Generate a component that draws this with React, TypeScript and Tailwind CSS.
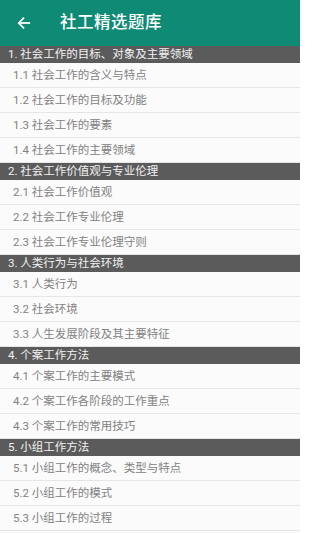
import React from 'react';

interface Section {
  title: string;
  items: string[];
}

const sections: Section[] = [
  {
    title: '1. 社会工作的目标、对象及主要领域',
    items: ['1.1 社会工作的含义与特点', '1.2 社会工作的目标及功能', '1.3 社会工作的要素', '1.4 社会工作的主要领域'],
  },
  {
    title: '2. 社会工作价值观与专业伦理',
    items: ['2.1 社会工作价值观', '2.2 社会工作专业伦理', '2.3 社会工作专业伦理守则'],
  },
  {
    title: '3. 人类行为与社会环境',
    items: ['3.1 人类行为', '3.2 社会环境', '3.3 人生发展阶段及其主要特征'],
  },
  {
    title: '4. 个案工作方法',
    items: ['4.1 个案工作的主要模式', '4.2 个案工作各阶段的工作重点', '4.3 个案工作的常用技巧'],
  },
  {
    title: '5. 小组工作方法',
    items: ['5.1 小组工作的概念、类型与特点', '5.2 小组工作的模式', '5.3 小组工作的过程'],
  },
];

const font = { fontFamily: '"Roboto", "Noto Sans CJK SC", sans-serif' };

const App: React.FC = () => {
  return (
    <div className="w-[300px] h-[533px] overflow-hidden bg-[#fafafa]" style={font}>
      {/* Toolbar */}
      <div className="h-[46px] bg-[#0f8a75] flex items-center">
        <svg className="ml-[17px] w-[14px] h-[14px]" viewBox="0 0 24 24" fill="none" stroke="#ffffff" strokeWidth="3" strokeLinecap="square">
          <path d="M21 12H4" />
          <path d="M11 4l-8 8 8 8" />
        </svg>
        <span className="ml-[29px] text-white text-[16.5px] font-medium tracking-[0.5px]">社工精选题库</span>
      </div>

      {sections.map((section) => (
        <div key={section.title}>
          <div className="h-[17px] bg-[#5b5b5b] flex items-center pl-[8px] pt-[1px] text-[#f2f2f2] text-[11.5px] leading-none shadow-[0_1px_1px_rgba(0,0,0,0.15)]">
            {section.title}
          </div>
          {section.items.map((item) => (
            <div
              key={item}
              className="h-[25px] flex items-center pl-[13px] pt-[1px] text-[#828282] text-[11.5px] leading-none border-b border-[#e6e6e6] bg-[#fbfbfb]"
            >
              {item}
            </div>
          ))}
        </div>
      ))}
    </div>
  );
};

export default App;
